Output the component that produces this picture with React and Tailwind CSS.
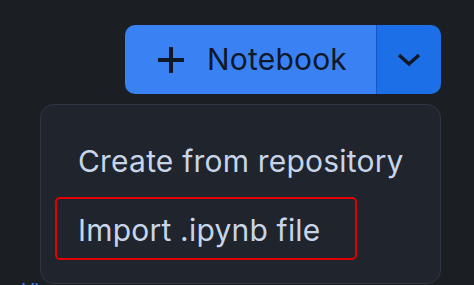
import React from "react";

export default function App() {
  return (
    <div
      className="relative w-[474px] h-[285px] overflow-hidden bg-[#1b1f24]"
      style={{ fontFamily: "Inter, 'Noto Sans', sans-serif" }}
    >
      <div className="flex justify-end pt-[25px] pr-[33px]">
        <div className="flex h-[69px] rounded-[10px] overflow-hidden">
          <button className="flex items-center gap-[22px] w-[252px] pl-[32px] bg-[#3a82f4] text-[#111827] text-[30px] tracking-[0.2px] border-r border-[#1657c8]">
            <svg width="28" height="28" viewBox="0 0 28 28" className="mt-[1px]">
              <path d="M14 1v26M1 14h26" stroke="#111827" strokeWidth="4" />
            </svg>
            <span>Notebook</span>
          </button>
          <button className="flex items-center justify-center w-[64px] bg-[#1c6fe6]">
            <svg width="24" height="16" viewBox="0 0 24 16">
              <path d="M2 3l10 9 10-9" fill="none" stroke="#111827" strokeWidth="3.5" />
            </svg>
          </button>
        </div>
      </div>

      <div className="absolute left-0 top-[277px] flex w-full justify-between px-[22px] text-[18px] text-[#3b82f6]">
        <span>View</span>
        <span>...</span>
      </div>

      <div className="absolute left-[40px] top-[104px] w-[401px] h-[180px] rounded-[14px] border border-[#2e3545] bg-[#1f242d] pt-[28px] text-[30px] tracking-[0.2px] text-[#c8d5e9]">
        <div className="pl-[37px] h-[56px] flex items-center">Create from repository</div>
        <div className="ml-[14px] mt-[8px] w-[302px] h-[63px] flex items-center pl-[21px] pt-[3px] rounded-[5px] border-2 border-[#e00000]">
          Import .ipynb file
        </div>
      </div>
    </div>
  );
}
